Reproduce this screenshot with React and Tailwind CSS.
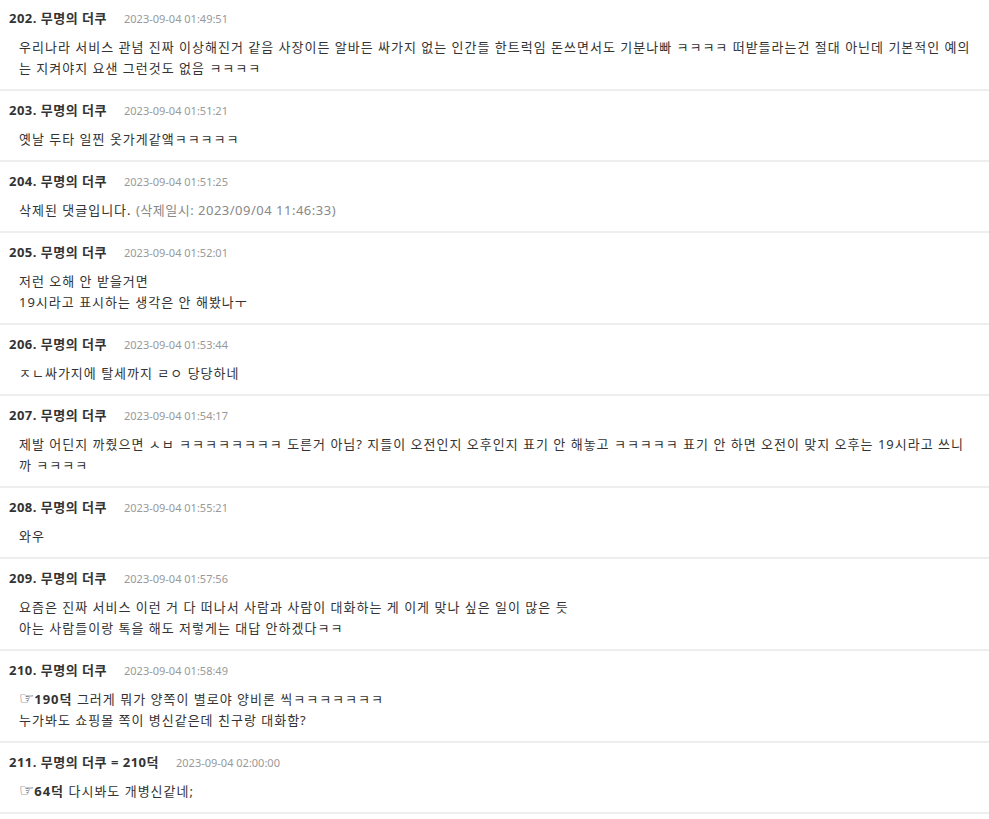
const comments = [
  {
    no: 202,
    date: '2023-09-04 01:49:51',
    lines: [
      '우리나라 서비스 관념 진짜 이상해진거 같음 사장이든 알바든 싸가지 없는 인간들 한트럭임 돈쓰면서도 기분나빠 ㅋㅋㅋㅋ 떠받들라는건 절대 아닌데 기본적인 예의는 지켜야지 요샌 그런것도 없음 ㅋㅋㅋㅋ',
    ],
  },
  { no: 203, date: '2023-09-04 01:51:21', lines: ['옛날 두타 일찐 옷가게같앸ㅋㅋㅋㅋㅋ'] },
  { no: 204, date: '2023-09-04 01:51:25', deleted: '(삭제일시: 2023/09/04 11:46:33)' },
  { no: 205, date: '2023-09-04 01:52:01', lines: ['저런 오해 안 받을거면', '19시라고 표시하는 생각은 안 해봤나ㅜ'] },
  { no: 206, date: '2023-09-04 01:53:44', lines: ['ㅈㄴ싸가지에 탈세까지 ㄹㅇ 당당하네'] },
  {
    no: 207,
    date: '2023-09-04 01:54:17',
    lines: [
      '제발 어딘지 까줬으면 ㅅㅂ ㅋㅋㅋㅋㅋㅋㅋㅋ 도른거 아님? 지들이 오전인지 오후인지 표기 안 해놓고 ㅋㅋㅋㅋㅋ 표기 안 하면 오전이 맞지 오후는 19시라고 쓰니까 ㅋㅋㅋㅋ',
    ],
  },
  { no: 208, date: '2023-09-04 01:55:21', lines: ['와우'] },
  {
    no: 209,
    date: '2023-09-04 01:57:56',
    lines: [
      '요즘은 진짜 서비스 이런 거 다 떠나서 사람과 사람이 대화하는 게 이게 맞나 싶은 일이 많은 듯',
      '아는 사람들이랑 톡을 해도 저렇게는 대답 안하겠다ㅋㅋ',
    ],
  },
  {
    no: 210,
    date: '2023-09-04 01:58:49',
    ref: '190덕',
    lines: [' 그러게 뭐가 양쪽이 별로야 양비론 씩ㅋㅋㅋㅋㅋㅋㅋ', '누가봐도 쇼핑몰 쪽이 병신같은데 친구랑 대화함?'],
  },
  { no: 211, date: '2023-09-04 02:00:00', reply: '210덕', ref: '64덕', lines: [' 다시봐도 개병신같네;'] },
];

const Comment = ({ c }) => (
  <li className="border-b-2 border-[#eeeeee] pt-[10px] pb-[10px] pl-[9px] pr-[16px]">
    <div className="flex items-center h-[20px] whitespace-nowrap">
      <span className="text-[13px] font-bold tracking-[0.5px] text-[#333333]">
        {c.no}. 무명의 더쿠{c.reply && <> = {c.reply}</>}
      </span>
      <span className="ml-[17px] text-[11px] text-[#999999]">{c.date}</span>
    </div>
    <div className="mt-[8px] pl-[10px] text-[13px] leading-[21px] tracking-[1px] break-all text-[#333333]">
      {c.deleted ? (
        <p>
          삭제된 댓글입니다. <span className="tracking-[0.5px] text-[#888888]">{c.deleted}</span>
        </p>
      ) : (
        c.lines.map((line, i) => (
          <p key={i}>
            {i === 0 && c.ref && (
              <span className="font-bold">
                <span className="text-[17px] leading-none font-normal tracking-normal text-[#24304d] font-['DejaVu_Sans']">☞</span>
                {c.ref}
              </span>
            )}
            {line}
          </p>
        ))
      )}
    </div>
  </li>
);

export default function App() {
  return (
    <div className="w-[989px] bg-white font-['Noto_Sans','Noto_Sans_CJK_KR',sans-serif]">
      <ul className="-mt-[1px]">
        {comments.map((c) => (
          <Comment key={c.no} c={c} />
        ))}
      </ul>
    </div>
  );
}
